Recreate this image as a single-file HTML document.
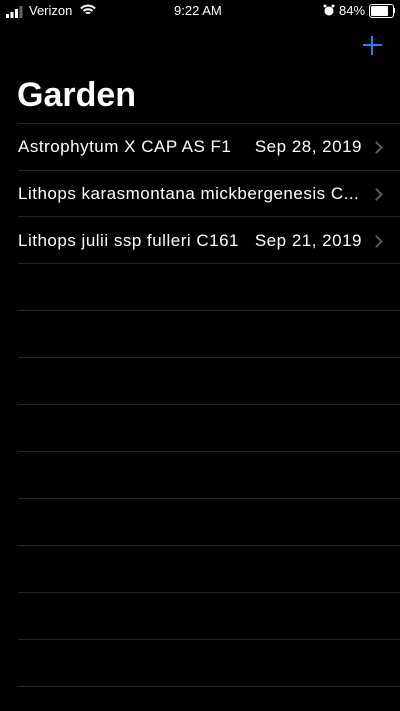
<!DOCTYPE html>
<html><head><meta charset="utf-8"><style>
body{margin:0;width:400px;height:711px;background:#000;color:#fff;font-family:"Liberation Sans",sans-serif;overflow:hidden;position:relative}
.a{position:absolute;white-space:nowrap}
.line{position:absolute;left:18px;right:0;height:1px;background:#262628}
.row{position:absolute;left:18px;font-size:17px;line-height:20px;letter-spacing:0.5px;white-space:nowrap}
.date{position:absolute;right:38px;font-size:17px;line-height:20px;letter-spacing:0.5px}
.chev{position:absolute;right:19px;width:7px;height:7px;border-right:2px solid #5a5a5e;border-top:2px solid #5a5a5e;transform:rotate(45deg)}
</style></head><body>
<div class="a" style="left:6px;top:5px;">
<svg width="18" height="12"><rect x="0" y="8" width="3" height="4" fill="#fff"/><rect x="4.5" y="6" width="3" height="6" fill="#fff"/><rect x="9" y="3" width="3" height="9" fill="#fff"/><rect x="13.5" y="0" width="3" height="12" fill="#666"/></svg></div>
<div class="a" style="left:29px;top:3px;font-size:13px">Verizon</div>
<svg class="a" style="left:80px;top:4px" width="16" height="12" viewBox="0 0 16 12"><path d="M1 4.5a10 10 0 0 1 14 0M3.5 7a6.5 6.5 0 0 1 9 0M6 9.5a3 3 0 0 1 4 0" stroke="#fff" stroke-width="2" fill="none"/></svg>
<div class="a" style="left:174px;top:3px;font-size:13px">9:22 AM</div>
<svg class="a" style="left:323px;top:4px" width="12" height="12"><circle cx="6" cy="7" r="4.5" fill="#fff"/><circle cx="2" cy="2" r="1.5" fill="#fff"/><circle cx="10" cy="2" r="1.5" fill="#fff"/></svg>
<div class="a" style="left:339px;top:3px;font-size:13px">84%</div>
<div class="a" style="left:369px;top:4px;width:21px;height:10px;border:1px solid #fff;border-radius:3px;padding:1px"><div style="width:17px;height:10px;background:#fff;border-radius:1px"></div></div>
<div class="a" style="left:393px;top:8px;width:2px;height:5px;background:#fff"></div>
<div class="a" style="left:363px;top:44px;width:19px;height:2px;background:#1a84ff"></div>
<div class="a" style="left:371px;top:36px;width:2px;height:19px;background:#1a84ff"></div>
<div class="a" style="left:17px;top:76px;font-size:34px;font-weight:bold">Garden</div>
<div class="line" style="top:123px"></div>
<div class="row" style="top:137px">Astrophytum X CAP AS F1</div><div class="date" style="top:137px">Sep 28, 2019</div><div class="chev" style="top:143px"></div>
<div class="line" style="top:170px"></div>
<div class="row" style="top:184px">Lithops karasmontana mickbergenesis C...</div><div class="chev" style="top:190px"></div>
<div class="line" style="top:216px"></div>
<div class="row" style="top:231px">Lithops julii ssp fulleri C161</div><div class="date" style="top:231px">Sep 21, 2019</div><div class="chev" style="top:237px"></div>
<div class="line" style="top:263px"></div>
<div class="line" style="top:310px"></div>
<div class="line" style="top:357px"></div>
<div class="line" style="top:404px"></div>
<div class="line" style="top:451px"></div>
<div class="line" style="top:498px"></div>
<div class="line" style="top:545px"></div>
<div class="line" style="top:592px"></div>
<div class="line" style="top:639px"></div>
<div class="line" style="top:686px"></div>
</body></html>
